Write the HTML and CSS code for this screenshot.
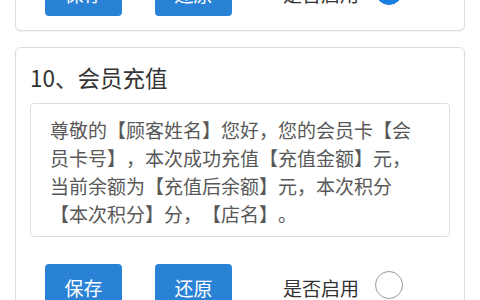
FILE: index.html
```html
<!DOCTYPE html>
<html lang="zh-CN">
<head>
<meta charset="utf-8">
<title>短信模板</title>
<link rel="stylesheet" href="styles.css">
</head>
<body>
<div class="list">
  <section class="card">
    <div class="actions actions-top">
      <button class="btn" type="button">保存</button>
      <button class="btn" type="button">还原</button>
      <label class="toggle"><span>是否启用</span><span class="radio on"></span></label>
    </div>
  </section>
  <section class="card">
    <h2 class="card-title">10、会员充值</h2>
    <textarea class="tpl" readonly>尊敬的【顾客姓名】您好，您的会员卡【会员卡号】，本次成功充值【充值金额】元，当前余额为【充值后余额】元，本次积分【本次积分】分，【店名】。</textarea>
    <div class="actions">
      <button class="btn" type="button">保存</button>
      <button class="btn" type="button">还原</button>
      <label class="toggle"><span>是否启用</span><span class="radio"></span></label>
    </div>
  </section>
</div>
</body>
</html>
```
FILE: styles.css
```css
html, body {
  margin: 0;
  background: #fff;
  font-family: "Noto Sans CJK SC", "Noto Sans", sans-serif;
  text-spacing-trim: space-all;
}

.list {
  display: flex;
  flex-direction: column;
  gap: 16px;
  padding: 0 15px;
  margin-top: -46px;
}

.card {
  border: 1px solid #dcdcdc;
  border-radius: 6px;
  padding: 15px 14px 14px;
  background: #fff;
  box-shadow: 0 1px 2px rgba(0, 0, 0, 0.06);
}

.card-title {
  margin: 0 0 12px;
  font-size: 22.5px;
  line-height: 28px;
  font-weight: normal;
  color: #333;
}

.tpl {
  display: block;
  width: 100%;
  height: 134px;
  box-sizing: border-box;
  margin: 0;
  padding: 12px 26px 8px 19px;
  border: 1px solid #dddddd;
  border-radius: 4px;
  font-family: "Noto Sans CJK SC", "Noto Sans", sans-serif;
  font-size: 19px;
  line-height: 28px;
  color: #585858;
  text-spacing-trim: space-all;
  resize: none;
  overflow: hidden;
  background: #fff;
}

.actions {
  display: flex;
  align-items: center;
  margin-top: 27px;
  padding-left: 15px;
}

.actions-top {
  margin-top: 0;
}

.btn {
  width: 77px;
  height: 46px;
  border: none;
  border-radius: 4px;
  background: #2a82d6;
  color: #fff;
  font-family: inherit;
  font-size: 19px;
  padding: 0;
}

.btn + .btn {
  margin-left: 33px;
}

.toggle {
  display: flex;
  align-items: center;
  gap: 16px;
  margin-left: 51px;
  font-size: 19px;
  color: #333;
}

.radio {
  width: 28px;
  height: 28px;
  box-sizing: border-box;
  border: 1.5px solid #999;
  border-radius: 50%;
  margin-top: -5px;
}

.radio.on {
  background: #1a7fe0;
  border-color: #1a7fe0;
}
```
